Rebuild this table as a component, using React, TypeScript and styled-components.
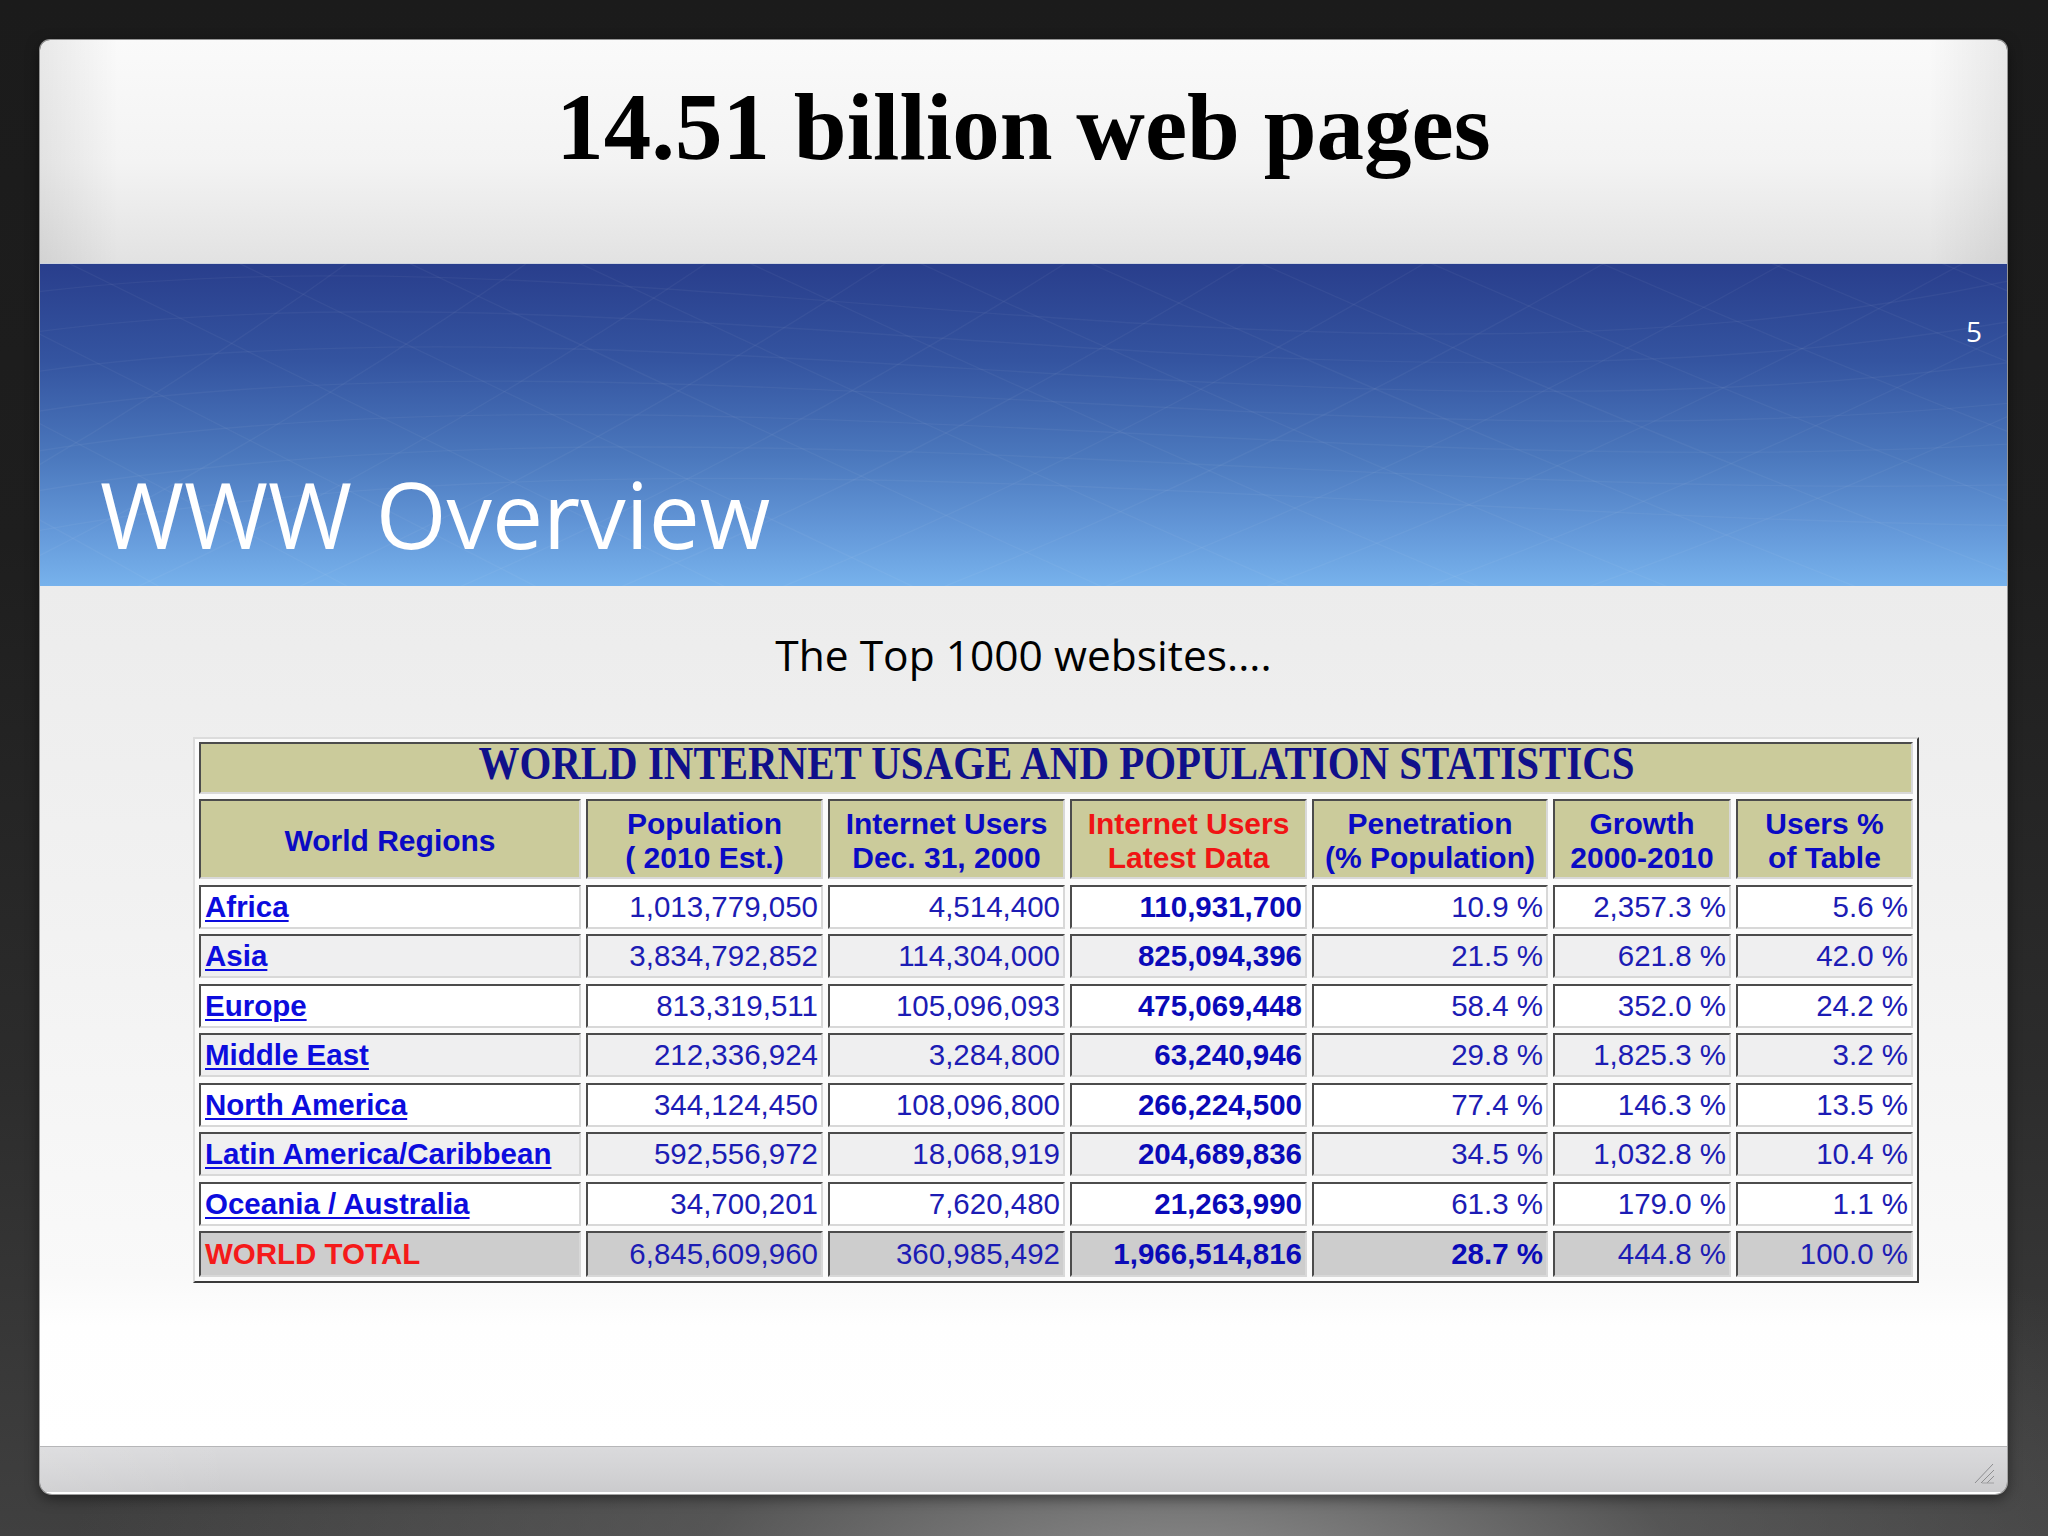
import React from 'react';
import styled, { createGlobalStyle } from 'styled-components';

const GlobalStyle = createGlobalStyle`
  html, body { margin: 0; padding: 0; }
  body {
    width: 2048px;
    height: 1536px;
    overflow: hidden;
    background: #1c1c1c;
  }
`;

const Page = styled.div`
  width: 2048px;
  height: 1536px;
  box-sizing: border-box;
  padding: 40px 0 0 40px;
  background:
    radial-gradient(ellipse 55% 30% at 58% 104%, rgba(150, 150, 150, 0.95) 0%, rgba(100, 100, 100, 0.6) 45%, rgba(60, 60, 60, 0) 100%),
    linear-gradient(to bottom, #1b1b1b 0%, #1e1e1e 35%, #2c2c2c 70%, #404040 100%);
`;

const Slide = styled.div`
  width: 1967px;
  height: 1454px;
  display: flex;
  flex-direction: column;
  border-radius: 10px 10px 12px 12px;
  overflow: hidden;
  box-shadow: 0 0 0 1px rgba(255, 255, 255, 0.55), 0 4px 14px rgba(0, 0, 0, 0.5);
`;

const Header = styled.header`
  flex: none;
  height: 224px;
  box-sizing: border-box;
  padding-top: 40px;
  text-align: center;
  border-bottom: 1px solid #cdd3de;
  background:
    linear-gradient(to right, rgba(0, 0, 0, 0.07), rgba(0, 0, 0, 0) 4%, rgba(0, 0, 0, 0) 96%, rgba(0, 0, 0, 0.07)),
    linear-gradient(to bottom, #fafafa 0%, #f3f3f3 55%, #e2e2e2 100%);
`;

const MainTitle = styled.h1`
  margin: 0;
  font-family: "Liberation Serif", "Times New Roman", serif;
  font-weight: 700;
  font-size: 95px;
  line-height: 1;
  color: #000;
`;

const Band = styled.section`
  position: relative;
  flex: none;
  height: 322px;
  box-sizing: border-box;
  padding: 53px 25px 26px 60px;
  display: flex;
  flex-direction: column;
  overflow: hidden;
  background: linear-gradient(to bottom, #293e8c 0%, #3454a0 30%, #4b78bd 60%, #6397d8 82%, #77b2ec 100%);
`;

const BandLines = styled.svg`
  position: absolute;
  inset: 0;
  width: 100%;
  height: 100%;
  pointer-events: none;
`;

const SlideNumber = styled.div`
  position: relative;
  align-self: flex-end;
  font-family: "Open Sans", "Liberation Sans", sans-serif;
  font-size: 28px;
  line-height: 1;
  color: #fff;
`;

const SectionTitle = styled.h2`
  position: relative;
  margin: auto 0 0 0;
  font-family: "Open Sans", "Liberation Sans", sans-serif;
  font-weight: 400;
  font-size: 91px;
  line-height: 1;
  color: #fff;
`;

const Content = styled.main`
  flex: 1;
  display: flex;
  flex-direction: column;
  padding-top: 48px;
  background: linear-gradient(to bottom, #ececec 0%, #f1f1f1 35%, #f9f9f9 80%, #fefefe 86%, #ffffff 100%);
`;

const Subtitle = styled.p`
  margin: 0;
  text-align: center;
  font-family: "Open Sans", "Liberation Sans", sans-serif;
  font-size: 42.5px;
  line-height: 1;
  color: #000;
`;

const StatsTable = styled.div`
  align-self: flex-start;
  margin: 60px 0 0 153px;
  display: grid;
  grid-template-columns: 382px 237px 237px 237px 236px 178px 177px;
  grid-template-rows: 52px 80px repeat(7, 44px) 46px;
  column-gap: 5px;
  row-gap: 5.5px;
  padding: 3px 4px 4px 4px;
  border: 2px solid;
  border-color: #dcdcdc #3a3a3a #3a3a3a #dcdcdc;
  background: #fbfbfb;
`;

const Cell = styled.div<{ $bg: string; $align: 'left' | 'right' | 'center'; $color: string; $bold?: boolean; $underline?: boolean }>`
  box-sizing: border-box;
  display: flex;
  align-items: center;
  justify-content: ${(p) => (p.$align === 'left' ? 'flex-start' : p.$align === 'right' ? 'flex-end' : 'center')};
  padding: 0 3px 0 4px;
  border: 2px solid;
  border-color: #4c4c4c #d8d8d8 #d8d8d8 #4c4c4c;
  background: ${(p) => p.$bg};
  color: ${(p) => p.$color};
  font-family: "Liberation Sans", Arial, sans-serif;
  font-size: 29.5px;
  font-weight: ${(p) => (p.$bold ? 700 : 400)};
  text-decoration: ${(p) => (p.$underline ? 'underline' : 'none')};
  text-decoration-thickness: 2px;
  text-underline-offset: 3px;
  white-space: nowrap;
  overflow: hidden;
`;

const TitleCell = styled.div`
  grid-column: 1 / -1;
  box-sizing: border-box;
  display: flex;
  align-items: center;
  justify-content: center;
  padding-bottom: 7px;
  border: 2px solid;
  border-color: #4c4c4c #d8d8d8 #d8d8d8 #4c4c4c;
  background: #cbcb9b;
`;

const TitleText = styled.span`
  display: inline-block;
  transform: scaleX(0.89);
  font-family: "Liberation Serif", "Times New Roman", serif;
  font-weight: 700;
  font-size: 46px;
  line-height: 1;
  color: #10108a;
  white-space: nowrap;
`;

const HeadCell = styled.div<{ $red?: boolean }>`
  box-sizing: border-box;
  display: flex;
  flex-direction: column;
  align-items: center;
  justify-content: center;
  padding-top: 4px;
  border: 2px solid;
  border-color: #4c4c4c #d8d8d8 #d8d8d8 #4c4c4c;
  background: #cbcb9b;
  color: ${(p) => (p.$red ? '#f01414' : '#0a0ac4')};
  font-family: "Liberation Sans", Arial, sans-serif;
  font-weight: 700;
  font-size: 30px;
  line-height: 34px;
  text-align: center;
  white-space: nowrap;
`;

const Footer = styled.footer`
  flex: none;
  height: 48px;
  box-sizing: border-box;
  display: flex;
  justify-content: flex-end;
  align-items: flex-end;
  padding: 0 12px 8px 0;
  border-top: 1px solid #b6b6b8;
  border-bottom: 2px solid #ffffff;
  background:
    linear-gradient(to right, rgba(255, 255, 255, 0.12), rgba(255, 255, 255, 0) 10%),
    linear-gradient(to bottom, #dadadc 0%, #d2d2d4 60%, #cbcbcd 100%);
`;

const Grip = styled.svg`
  width: 22px;
  height: 22px;
`;

const netPaths: string[] = [
  ...Array.from({ length: 16 }, (_, i) => `M ${-500 + i * 170} -10 Q ${-150 + i * 175} 170 ${150 + i * 190} 340`),
  ...Array.from({ length: 12 }, (_, i) => `M ${2300 - i * 180} -10 Q ${1900 - i * 170} 200 ${1500 - i * 160} 340`),
  ...Array.from({ length: 7 }, (_, i) => `M -20 ${30 + i * 40} C 600 ${-50 + i * 34} 1300 ${170 + i * 14} 2000 ${10 + i * 42}`),
];

type Row = {
  region: string;
  values: string[];
  bg: string;
  total?: boolean;
};

const rows: Row[] = [
  { region: 'Africa', values: ['1,013,779,050', '4,514,400', '110,931,700', '10.9 %', '2,357.3 %', '5.6 %'], bg: '#ffffff' },
  { region: 'Asia', values: ['3,834,792,852', '114,304,000', '825,094,396', '21.5 %', '621.8 %', '42.0 %'], bg: '#efeff0' },
  { region: 'Europe', values: ['813,319,511', '105,096,093', '475,069,448', '58.4 %', '352.0 %', '24.2 %'], bg: '#ffffff' },
  { region: 'Middle East', values: ['212,336,924', '3,284,800', '63,240,946', '29.8 %', '1,825.3 %', '3.2 %'], bg: '#efeff0' },
  { region: 'North America', values: ['344,124,450', '108,096,800', '266,224,500', '77.4 %', '146.3 %', '13.5 %'], bg: '#ffffff' },
  { region: 'Latin America/Caribbean', values: ['592,556,972', '18,068,919', '204,689,836', '34.5 %', '1,032.8 %', '10.4 %'], bg: '#efeff0' },
  { region: 'Oceania / Australia', values: ['34,700,201', '7,620,480', '21,263,990', '61.3 %', '179.0 %', '1.1 %'], bg: '#ffffff' },
  { region: 'WORLD TOTAL', values: ['6,845,609,960', '360,985,492', '1,966,514,816', '28.7 %', '444.8 %', '100.0 %'], bg: '#cdcdcd', total: true },
];

const headers: { lines: string[]; red?: boolean }[] = [
  { lines: ['World Regions'] },
  { lines: ['Population', '( 2010 Est.)'] },
  { lines: ['Internet Users', 'Dec. 31, 2000'] },
  { lines: ['Internet Users', 'Latest Data'], red: true },
  { lines: ['Penetration', '(% Population)'] },
  { lines: ['Growth', '2000-2010'] },
  { lines: ['Users %', 'of Table'] },
];

export default function App() {
  return (
    <>
      <GlobalStyle />
      <Page>
        <Slide>
          <Header>
            <MainTitle>14.51 billion web pages</MainTitle>
          </Header>
          <Band>
            <BandLines viewBox="0 0 1967 322" preserveAspectRatio="none">
              {netPaths.map((d, i) => (
                <path key={i} d={d} fill="none" stroke="#ffffff" strokeOpacity={0.045} strokeWidth={1.4} />
              ))}
            </BandLines>
            <SlideNumber>5</SlideNumber>
            <SectionTitle>WWW Overview</SectionTitle>
          </Band>
          <Content>
            <Subtitle>The Top 1000 websites....</Subtitle>
            <StatsTable>
              <TitleCell>
                <TitleText>WORLD INTERNET USAGE AND POPULATION STATISTICS</TitleText>
              </TitleCell>
              {headers.map((h, i) => (
                <HeadCell key={i} $red={h.red}>
                  {h.lines.map((l, j) => (
                    <span key={j}>{l}</span>
                  ))}
                </HeadCell>
              ))}
              {rows.map((r) => (
                <React.Fragment key={r.region}>
                  <Cell
                    $bg={r.bg}
                    $align="left"
                    $color={r.total ? '#f51a1a' : '#0c0cde'}
                    $bold
                    $underline={!r.total}
                  >
                    {r.region}
                  </Cell>
                  {r.values.map((v, j) => (
                    <Cell
                      key={j}
                      $bg={r.bg}
                      $align="right"
                      $color={j === 2 || (r.total && j === 3) ? '#0a0ab8' : '#1c1cb4'}
                      $bold={j === 2 || (r.total && j === 3)}
                    >
                      {v}
                    </Cell>
                  ))}
                </React.Fragment>
              ))}
            </StatsTable>
          </Content>
          <Footer>
            <Grip viewBox="0 0 22 22">
              <line x1="2" y1="21" x2="20" y2="2" stroke="#8e8e90" strokeWidth="1" />
              <line x1="8" y1="21" x2="21" y2="8" stroke="#8e8e90" strokeWidth="1" />
              <line x1="14" y1="21" x2="21" y2="14" stroke="#8e8e90" strokeWidth="1" />
              <line x1="9" y1="21" x2="21" y2="21" stroke="#a0a0a2" strokeWidth="1" />
            </Grip>
          </Footer>
        </Slide>
      </Page>
    </>
  );
}
